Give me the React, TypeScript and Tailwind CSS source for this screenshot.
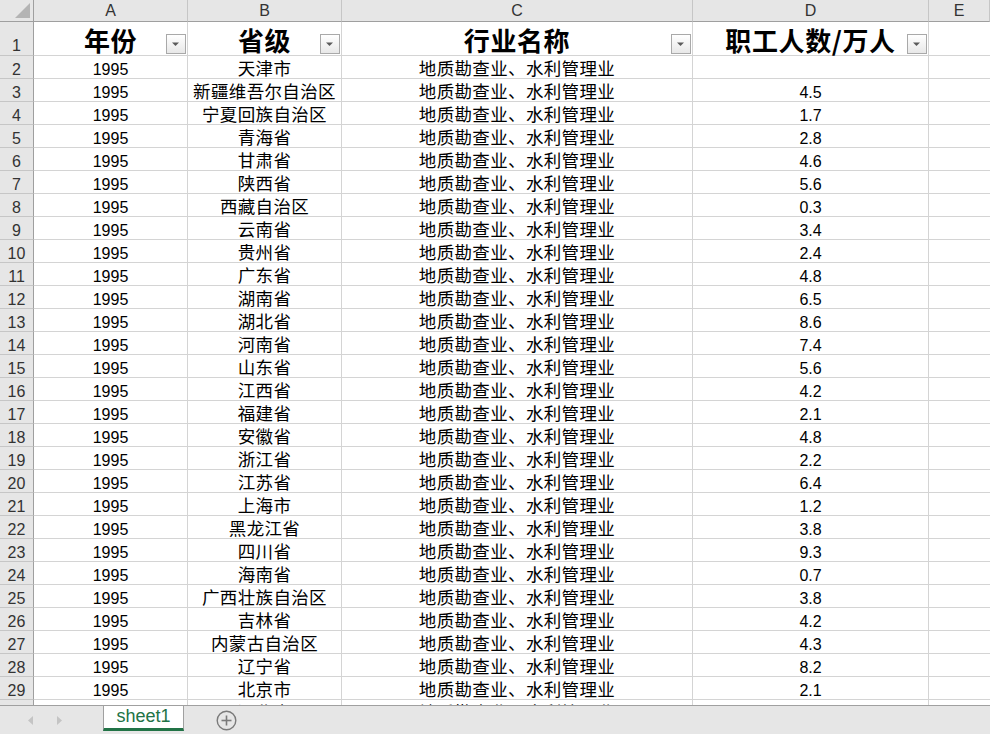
import React from "react";

const rows: [string, string][] = [
  ["天津市", ""],
  ["新疆维吾尔自治区", "4.5"],
  ["宁夏回族自治区", "1.7"],
  ["青海省", "2.8"],
  ["甘肃省", "4.6"],
  ["陕西省", "5.6"],
  ["西藏自治区", "0.3"],
  ["云南省", "3.4"],
  ["贵州省", "2.4"],
  ["广东省", "4.8"],
  ["湖南省", "6.5"],
  ["湖北省", "8.6"],
  ["河南省", "7.4"],
  ["山东省", "5.6"],
  ["江西省", "4.2"],
  ["福建省", "2.1"],
  ["安徽省", "4.8"],
  ["浙江省", "2.2"],
  ["江苏省", "6.4"],
  ["上海市", "1.2"],
  ["黑龙江省", "3.8"],
  ["四川省", "9.3"],
  ["海南省", "0.7"],
  ["广西壮族自治区", "3.8"],
  ["吉林省", "4.2"],
  ["内蒙古自治区", "4.3"],
  ["辽宁省", "8.2"],
  ["北京市", "2.1"],
  ["河北省", "5.3"],
];

function FilterButton() {
  return (
    <div className="absolute right-[1px] bottom-[1px] w-[20px] h-[20px] border border-[#a9a9a9] bg-gradient-to-b from-white to-[#e8e8e8] flex items-center justify-center">
      <svg width="8" height="5" viewBox="0 0 8 5">
        <polygon points="0,0.5 7,0.5 3.5,4" fill="#5a5a5a" />
      </svg>
    </div>
  );
}

const cellBase = "border-r border-b border-[#d4d4d4] flex items-end justify-center whitespace-nowrap";
const cjk = "font-['Noto_Sans_CJK_SC','Noto_Sans',sans-serif] text-[17.5px] leading-[20px] tracking-[0.35px]";
const num = "font-['Liberation_Sans',Arial,sans-serif] text-[16px] leading-[17px]";

export default function App() {
  return (
    <div className="w-[990px] h-[734px] overflow-hidden bg-white flex flex-col font-['Noto_Sans_CJK_SC','Noto_Sans',sans-serif] text-black">
      <div className="h-[705px] overflow-hidden flex flex-col shrink-0">
        {/* column header */}
        <div className="flex h-[22px] shrink-0 bg-[#e6e6e6] text-[#333] font-['Liberation_Sans',Arial,sans-serif] text-[16px] leading-[20px]">
          <div className="w-[34px] shrink-0 border-r border-b border-[#9f9f9f] relative">
            <svg className="absolute left-0 top-0" width="33" height="21" viewBox="0 0 33 21">
              <polygon points="30,3 30,18 15,18" fill="#b4b4b4" />
            </svg>
          </div>
          {[
            ["A", "w-[154px]"],
            ["B", "w-[154px]"],
            ["C", "w-[351px]"],
            ["D", "w-[236px]"],
            ["E", "flex-1"],
          ].map(([l, w]) => (
            <div key={l} className={`${w} shrink-0 border-r border-b border-r-[#c6c6c6] border-b-[#9f9f9f] text-center pt-[1px]`}>
              {l}
            </div>
          ))}
        </div>
        {/* header row 1 */}
        <div className="flex h-[34px] shrink-0">
          <div className={`w-[34px] shrink-0 bg-[#e6e6e6] border-r border-b border-r-[#9f9f9f] border-b-[#c6c6c6] text-[#333] ${num} flex items-end justify-center pb-[1px]`}>
            1
          </div>
          {[
            ["年份", "w-[154px]"],
            ["省级", "w-[154px]"],
            ["行业名称", "w-[351px]"],
            ["职工人数/万人", "w-[236px]"],
          ].map(([t, w]) => (
            <div key={t} className={`${w} shrink-0 relative ${cellBase} font-bold text-[26px] leading-[31px] tracking-[0.6px]`}>
              {t}
              <FilterButton />
            </div>
          ))}
          <div className="flex-1 border-b border-[#d4d4d4]" />
        </div>
        {rows.map(([p, v], i) => (
          <div key={i} className="flex h-[23px] shrink-0">
            <div className={`w-[34px] shrink-0 bg-[#e6e6e6] border-r border-b border-r-[#9f9f9f] border-b-[#c6c6c6] text-[#333] ${num} flex items-end justify-center`}>
              {i + 2}
            </div>
            <div className={`w-[154px] shrink-0 ${cellBase} ${num}`}>1995</div>
            <div className={`w-[154px] shrink-0 ${cellBase} ${cjk}`}>{p}</div>
            <div className={`w-[351px] shrink-0 ${cellBase} ${cjk}`}>地质勘查业、水利管理业</div>
            <div className={`w-[236px] shrink-0 ${cellBase} ${num}`}>{v}</div>
            <div className="flex-1 border-b border-[#d4d4d4]" />
          </div>
        ))}
      </div>
      {/* tab bar */}
      <div className="h-[29px] shrink-0 bg-[#e6e6e6] border-t border-[#a0a0a0] flex items-start relative">
        <svg className="absolute left-[27px] top-[10px]" width="7" height="9" viewBox="0 0 7 9">
          <polygon points="6,0 1,4.5 6,9" fill="#c4c4c4" />
        </svg>
        <svg className="absolute left-[56px] top-[10px]" width="7" height="9" viewBox="0 0 7 9">
          <polygon points="1,0 6,4.5 1,9" fill="#c4c4c4" />
        </svg>
        <div className="ml-[103px] w-[81px] h-[25px] bg-white border-l border-r border-[#a0a0a0] border-b-[3px] border-b-[#217346] text-[#217346] font-['Liberation_Sans',Arial,sans-serif] text-[18px] leading-[21px] text-center">
          sheet1
        </div>
        <svg className="absolute left-[216px] top-[4px]" width="21" height="21" viewBox="0 0 21 21">
          <circle cx="10.5" cy="10.5" r="9.3" fill="none" stroke="#7a7a7a" strokeWidth="1.4" />
          <line x1="5.5" y1="10.5" x2="15.5" y2="10.5" stroke="#7a7a7a" strokeWidth="1.6" />
          <line x1="10.5" y1="5.5" x2="10.5" y2="15.5" stroke="#7a7a7a" strokeWidth="1.6" />
        </svg>
      </div>
    </div>
  );
}
